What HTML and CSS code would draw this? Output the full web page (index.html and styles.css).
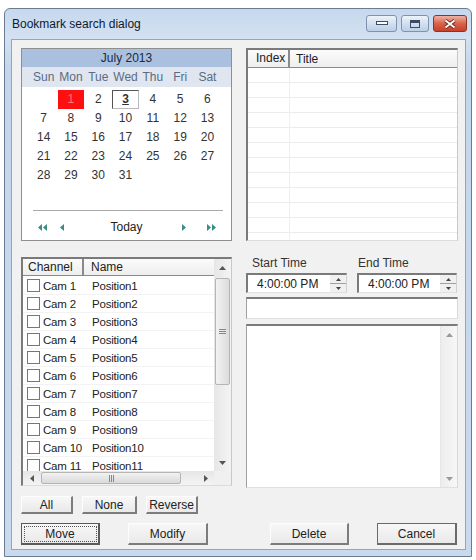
FILE: index.html
```html
<!DOCTYPE html>
<html lang="en">
<head>
<meta charset="utf-8">
<title>Bookmark search dialog</title>
<link rel="stylesheet" href="styles.css">
</head>
<body>
<div class="window">
  <div class="titlebar">
    <span class="title">Bookmark search dialog</span>
    <div class="caption">
      <span class="cbtn min"><svg width="12" height="5" viewBox="0 0 12 5"><rect x="0.5" y="0.5" width="11" height="3" fill="#fff" stroke="#3c4d66"/></svg></span>
      <span class="cbtn max"><svg width="10" height="8" viewBox="0 0 10 8"><rect x="0.5" y="0.5" width="9" height="7" fill="none" stroke="#3c4d66"/><rect x="1" y="1" width="8" height="2" fill="#3c4d66"/></svg></span>
      <span class="cbtn close"><svg width="12" height="10" viewBox="0 0 12 10"><path d="M1.5 1.5 L10.5 8.5 M10.5 1.5 L1.5 8.5" stroke="#6a2216" stroke-width="3.6"/><path d="M1.5 1.5 L10.5 8.5 M10.5 1.5 L1.5 8.5" stroke="#fff" stroke-width="2"/></svg></span>
    </div>
  </div>

  <div class="client">
    <div class="top-row">
      <div class="calendar">
        <div class="cal-head">July 2013</div>
        <div class="cal-days">
          <span>Sun</span><span>Mon</span><span>Tue</span><span>Wed</span><span>Thu</span><span>Fri</span><span>Sat</span>
        </div>
        <div class="cal-grid">
          <span></span><span class="sel">1</span><span>2</span><span class="today">3</span><span>4</span><span>5</span><span>6</span>
          <span>7</span><span>8</span><span>9</span><span>10</span><span>11</span><span>12</span><span>13</span>
          <span>14</span><span>15</span><span>16</span><span>17</span><span>18</span><span>19</span><span>20</span>
          <span>21</span><span>22</span><span>23</span><span>24</span><span>25</span><span>26</span><span>27</span>
          <span>28</span><span>29</span><span>30</span><span>31</span>
        </div>
        <div class="cal-spacer"></div>
        <div class="cal-sep"></div>
        <div class="cal-nav">
          <div class="nav-left">
            <svg width="9" height="7" viewBox="0 0 9 7"><path d="M4 0 L0 3.5 L4 7Z M9 0 L5 3.5 L9 7Z" fill="#3a8c86"/></svg>
            <svg width="4" height="7" viewBox="0 0 4 7"><path d="M4 0 L0 3.5 L4 7Z" fill="#3a8c86"/></svg>
          </div>
          <span class="today-link">Today</span>
          <div class="nav-right">
            <svg width="4" height="7" viewBox="0 0 4 7"><path d="M0 0 L4 3.5 L0 7Z" fill="#3a8c86"/></svg>
            <svg width="9" height="7" viewBox="0 0 9 7"><path d="M0 0 L4 3.5 L0 7Z M5 0 L9 3.5 L5 7Z" fill="#3a8c86"/></svg>
          </div>
        </div>
      </div>

      <div class="listview bookmarks">
        <div class="lv-head">
          <span class="col-index">Index</span><span class="col-title">Title</span>
        </div>
        <div class="bm-body"></div>
      </div>
    </div>

    <div class="mid-row">
      <div class="left-col">
        <div class="listview channels">
          <div class="ch-main">
            <div class="lv-head">
              <span class="col-ch">Channel</span><span class="col-name">Name</span>
            </div>
            <div class="ch-body">
              <div class="ch-row"><span class="cell-ch"><span class="chk"></span>Cam 1</span><span class="cell-name">Position1</span></div>
              <div class="ch-row"><span class="cell-ch"><span class="chk"></span>Cam 2</span><span class="cell-name">Position2</span></div>
              <div class="ch-row"><span class="cell-ch"><span class="chk"></span>Cam 3</span><span class="cell-name">Position3</span></div>
              <div class="ch-row"><span class="cell-ch"><span class="chk"></span>Cam 4</span><span class="cell-name">Position4</span></div>
              <div class="ch-row"><span class="cell-ch"><span class="chk"></span>Cam 5</span><span class="cell-name">Position5</span></div>
              <div class="ch-row"><span class="cell-ch"><span class="chk"></span>Cam 6</span><span class="cell-name">Position6</span></div>
              <div class="ch-row"><span class="cell-ch"><span class="chk"></span>Cam 7</span><span class="cell-name">Position7</span></div>
              <div class="ch-row"><span class="cell-ch"><span class="chk"></span>Cam 8</span><span class="cell-name">Position8</span></div>
              <div class="ch-row"><span class="cell-ch"><span class="chk"></span>Cam 9</span><span class="cell-name">Position9</span></div>
              <div class="ch-row"><span class="cell-ch"><span class="chk"></span>Cam 10</span><span class="cell-name">Position10</span></div>
              <div class="ch-row"><span class="cell-ch"><span class="chk"></span>Cam 11</span><span class="cell-name">Position11</span></div>
            </div>
          </div>
          <div class="vscroll">
            <span class="sb-btn"><svg width="7" height="4" viewBox="0 0 7 4"><path d="M0 4 L3.5 0 L7 4Z" fill="#555"/></svg></span>
            <div class="vthumb"><svg width="7" height="5" viewBox="0 0 7 5"><path d="M0 0.5H7M0 2.5H7M0 4.5H7" stroke="#888"/></svg></div>
            <div class="sb-fill"></div>
            <span class="sb-btn"><svg width="7" height="4" viewBox="0 0 7 4"><path d="M0 0 L3.5 4 L7 0Z" fill="#555"/></svg></span>
          </div>
          <div class="hscroll">
            <span class="sb-btn h"><svg width="4" height="7" viewBox="0 0 4 7"><path d="M4 0 L0 3.5 L4 7Z" fill="#555"/></svg></span>
            <div class="hthumb"><svg width="5" height="7" viewBox="0 0 5 7"><path d="M0.5 0V7M2.5 0V7M4.5 0V7" stroke="#888"/></svg></div>
            <div class="sb-fill"></div>
            <span class="sb-btn h"><svg width="4" height="7" viewBox="0 0 4 7"><path d="M0 0 L4 3.5 L0 7Z" fill="#555"/></svg></span>
          </div>
          <div class="corner"></div>
        </div>
        <div class="sel-buttons">
          <span class="btn b-all">All</span>
          <span class="btn b-none">None</span>
          <span class="btn b-rev">Reverse</span>
        </div>
      </div>

      <div class="right-col">
        <div class="time-grid">
          <span class="tlabel">Start Time</span>
          <span class="tlabel end">End Time</span>
          <div class="timebox"><span class="tval">4:00:00 PM</span>
            <div class="spin">
              <span><svg width="5" height="3" viewBox="0 0 5 3"><path d="M0 3 L2.5 0 L5 3Z" fill="#444"/></svg></span>
              <span><svg width="5" height="3" viewBox="0 0 5 3"><path d="M0 0 L2.5 3 L5 0Z" fill="#444"/></svg></span>
            </div>
          </div>
          <div class="timebox"><span class="tval">4:00:00 PM</span>
            <div class="spin">
              <span><svg width="5" height="3" viewBox="0 0 5 3"><path d="M0 3 L2.5 0 L5 3Z" fill="#444"/></svg></span>
              <span><svg width="5" height="3" viewBox="0 0 5 3"><path d="M0 0 L2.5 3 L5 0Z" fill="#444"/></svg></span>
            </div>
          </div>
        </div>
        <div class="textfield"></div>
        <div class="multiline">
          <div class="ml-text"></div>
          <div class="vscroll disabled">
            <span class="sb-btn"><svg width="7" height="4" viewBox="0 0 7 4"><path d="M0 4 L3.5 0 L7 4Z" fill="#999"/></svg></span>
            <div class="sb-fill"></div>
            <span class="sb-btn"><svg width="7" height="4" viewBox="0 0 7 4"><path d="M0 0 L3.5 4 L7 0Z" fill="#999"/></svg></span>
          </div>
        </div>
      </div>
    </div>

    <div class="bottom-row">
      <div class="bottom-left">
        <span class="btn big default">Move</span>
        <span class="btn big">Modify</span>
      </div>
      <div class="bottom-right">
        <span class="btn big">Delete</span>
        <span class="btn big cancel">Cancel</span>
      </div>
    </div>
  </div>
</div>
</body>
</html>
```

FILE: styles.css
```css
* { box-sizing: border-box; }
html, body { margin: 0; padding: 0; }
body {
  background: #fff;
  font-family: "Liberation Sans", Arial, sans-serif;
  font-size: 12px;
  color: #222;
}

.window {
  margin: 8px 0 0 4px;
  width: 468px;
  height: 549px;
  border: 1px solid #6a7b92;
  border-radius: 6px 6px 0 0;
  background: linear-gradient(#c6d8ed, #d3e1f1 28px, #c4d6eb 60px, #c9daee);
  display: flex;
  flex-direction: column;
}

.titlebar {
  height: 30px;
  flex: none;
  display: flex;
  justify-content: space-between;
  padding: 0 4px 0 7px;
}
.title { align-self: center; color: #0d1a2e; font-size: 12px; }
.caption { display: flex; gap: 4px; padding-top: 6px; }
.cbtn {
  height: 17px;
  border: 1px solid #7f93ad;
  border-radius: 3px;
  display: flex;
  align-items: center;
  justify-content: center;
}
.cbtn.min { width: 31px; background: linear-gradient(#edf3fa, #d2e0f0 50%, #bccfe6); }
.cbtn.max { width: 28px; background: linear-gradient(#edf3fa, #d2e0f0 50%, #bccfe6); }
.cbtn.close { width: 34px; background: linear-gradient(#eeb3a6, #d9634b 50%, #c7402a); border-color: #8d3324; }

.client {
  flex: 1;
  margin: 0 5px 6px 6px;
  background: #f1f1f1;
  border: 1px solid #93a6bd;
  padding: 8px 7px 4px 9px;
  display: flex;
  flex-direction: column;
}

.top-row {
  display: grid;
  grid-template-columns: 211px 212px;
  column-gap: 14px;
  height: 193px;
  flex: none;
}

/* calendar */
.calendar {
  background: #fff;
  border: 1px solid #8f8f8f;
  display: flex;
  flex-direction: column;
}
.cal-head {
  height: 18px;
  line-height: 18px;
  background: #a9c1de;
  text-align: center;
  color: #1a2945;
}
.cal-days, .cal-grid {
  display: grid;
  grid-template-columns: repeat(7, 27.3px);
  padding-left: 8px;
}
.cal-days {
  height: 20px;
  background: #dfe6ef;
  color: #5b6b83;
  align-items: center;
}
.cal-days span { text-align: center; }
.cal-grid { margin-top: 3px; grid-auto-rows: 19px; color: #333; }
.cal-grid span { text-align: center; line-height: 19px; }
.cal-grid .sel { background: #ff1010; color: #ff7a7a; margin: 0 1px; }
.cal-grid .today { border: 1px solid #555; border-right-color: #bbb; border-bottom-color: #bbb; line-height: 17px; font-weight: bold; text-decoration: underline; }
.cal-spacer { flex: 1; }
.cal-sep { height: 1px; background: #a8a8a8; margin: 0 8px 3px 11px; }
.cal-nav {
  height: 26px;
  display: grid;
  grid-template-columns: 1fr auto 1fr;
  align-items: center;
}
.nav-left { display: flex; align-items: center; gap: 13px; padding-left: 16px; }
.nav-right { display: flex; align-items: center; gap: 21px; justify-content: flex-end; padding-right: 15px; }
.today-link { color: #222; }

/* list views */
.listview {
  background: #fff;
  border-top: 2px solid #7a7a7a;
  border-left: 2px solid #7a7a7a;
  border-right: 1px solid #c8c8c8;
  border-bottom: 1px solid #dcdcdc;
}
.lv-head {
  height: 18px;
  display: flex;
  align-items: center;
  background: linear-gradient(#fbfbfb, #eeeeee);
  border-bottom: 1px solid #8a8a8a;
  color: #222;
}
.bookmarks { display: flex; flex-direction: column; }
.col-index { width: 42px; height: 100%; line-height: 17px; padding-left: 8px; border-right: 2px solid #8a8a8a; }
.col-title { padding-left: 6px; }
.bm-body {
  flex: 1;
  background:
    linear-gradient(to right, transparent 41px, #eeeeee 41px, #eeeeee 42px, transparent 42px),
    repeating-linear-gradient(to bottom, transparent 0, transparent 14px, #ececec 14px, #ececec 15px);
}

.mid-row {
  margin-top: 16px;
  display: grid;
  grid-template-columns: 211px 212px;
  column-gap: 14px;
  flex: none;
}
.left-col { display: flex; flex-direction: column; }

.channels {
  height: 229px;
  display: grid;
  grid-template-columns: 1fr 17px;
  grid-template-rows: 1fr 14px;
}
.ch-main { display: flex; flex-direction: column; overflow: hidden; min-height: 0; }
.ch-main .lv-head { height: 17px; flex: none; }
.col-ch { width: 61px; height: 100%; line-height: 16px; padding-left: 5px; border-right: 2px solid #8a8a8a; }
.col-name { padding-left: 7px; }
.ch-body { flex: 1; overflow: hidden; padding-top: 1px; font-size: 11.5px; }
.ch-row {
  height: 18px;
  display: grid;
  grid-template-columns: 61px 1fr;
  align-items: center;
  border-bottom: 1px solid #f3f3f3;
  white-space: nowrap;
}
.cell-ch { display: flex; align-items: center; gap: 3px; padding-left: 4px; letter-spacing: -0.2px; }
.cell-name { padding-left: 8px; letter-spacing: -0.2px; }
.chk { width: 13px; height: 13px; border: 1px solid #777; background: #fff; flex: none; }

.vscroll {
  grid-row: 1;
  grid-column: 2;
  display: flex;
  flex-direction: column;
  align-items: stretch;
  background: linear-gradient(to right, #e6e6e6, #f4f4f4);
}
.sb-btn {
  height: 17px;
  flex: none;
  display: flex;
  align-items: center;
  justify-content: center;
}
.sb-btn.h { width: 17px; height: auto; }
.vthumb {
  margin: 2px 1px 0;
  height: 107px;
  border: 1px solid #b5b5b5;
  border-radius: 2px;
  background: linear-gradient(to right, #f2f2f2, #dcdcdc);
  display: flex;
  align-items: center;
  justify-content: center;
  flex: none;
}
.sb-fill { flex: 1; }
.hscroll {
  grid-row: 2;
  grid-column: 1;
  display: flex;
  background: linear-gradient(#e6e6e6, #f4f4f4);
}
.hthumb {
  margin: 1px 0 1px 1px;
  width: 140px;
  border: 1px solid #b5b5b5;
  border-radius: 2px;
  background: linear-gradient(#f2f2f2, #d9d9d9);
  display: flex;
  align-items: center;
  justify-content: center;
  flex: none;
}
.corner { grid-row: 2; grid-column: 2; background: #f0f0f0; }

.sel-buttons { display: flex; gap: 9px; margin-top: 10px; }

.btn {
  height: 18px;
  display: flex;
  align-items: center;
  justify-content: center;
  background: linear-gradient(#f7f7f7, #e9e9e9);
  border-top: 1px solid #fdfdfd;
  border-left: 1px solid #fdfdfd;
  border-right: 2px solid #7c7c7c;
  border-bottom: 2px solid #7c7c7c;
  color: #222;
}
.b-all { width: 52px; }
.b-none { width: 55px; }
.b-rev { width: 52px; }
.btn.big { height: 22px; width: 79px; }
.btn.default {
  border: 1px solid #5a5a5a;
  border-right-width: 2px;
  border-bottom-width: 2px;
  outline: 1px dotted #555;
  outline-offset: -4px;
}
.btn.cancel { border: 1px solid #6a6a6a; border-right-width: 2px; border-bottom-width: 2px; width: 80px; }

/* right column */
.right-col { display: flex; flex-direction: column; }
.time-grid {
  display: grid;
  grid-template-columns: 101px 100px;
  column-gap: 10px;
  row-gap: 2px;
}
.tlabel { height: 14px; line-height: 12px; padding-left: 6px; color: #333; }
.tlabel.end { margin-left: -5px; }
.timebox {
  height: 20px;
  display: flex;
  align-items: center;
  justify-content: space-between;
  background: #fff;
  border-top: 2px solid #7a7a7a;
  border-left: 2px solid #7a7a7a;
  border-right: 1px solid #d0d0d0;
  border-bottom: 1px solid #e0e0e0;
  padding-left: 9px;
}
.tval { color: #222; }
.spin {
  width: 16px;
  height: 100%;
  display: flex;
  flex-direction: column;
  background: #f0f0f0;
}
.spin span {
  flex: 1;
  display: flex;
  align-items: center;
  justify-content: center;
}
.spin span:first-child { border-bottom: 1px solid #a0a0a0; }

.textfield {
  margin-top: 4px;
  height: 22px;
  background: #fff;
  border-top: 2px solid #7a7a7a;
  border-left: 1px solid #a0a0a0;
  border-right: 1px solid #d8d8d8;
  border-bottom: 1px solid #e0e0e0;
}
.multiline {
  margin-top: 5px;
  height: 164px;
  display: flex;
  background: #fff;
  border-top: 2px solid #7a7a7a;
  border-left: 1px solid #a0a0a0;
  border-right: 1px solid #d8d8d8;
  border-bottom: 1px solid #e0e0e0;
}
.ml-text { flex: 1; }
.multiline .vscroll { width: 17px; background: linear-gradient(to right, #ededed, #f7f7f7); border-left: 1px solid #e6e6e6; }

.bottom-row {
  margin-top: 9px;
  display: grid;
  grid-template-columns: 211px 212px;
  column-gap: 14px;
  flex: none;
}
.bottom-left { display: flex; gap: 28px; }
.bottom-right { display: flex; gap: 28px; padding-left: 24px; }
.bottom-left .btn + .btn { width: 80px; }
```
